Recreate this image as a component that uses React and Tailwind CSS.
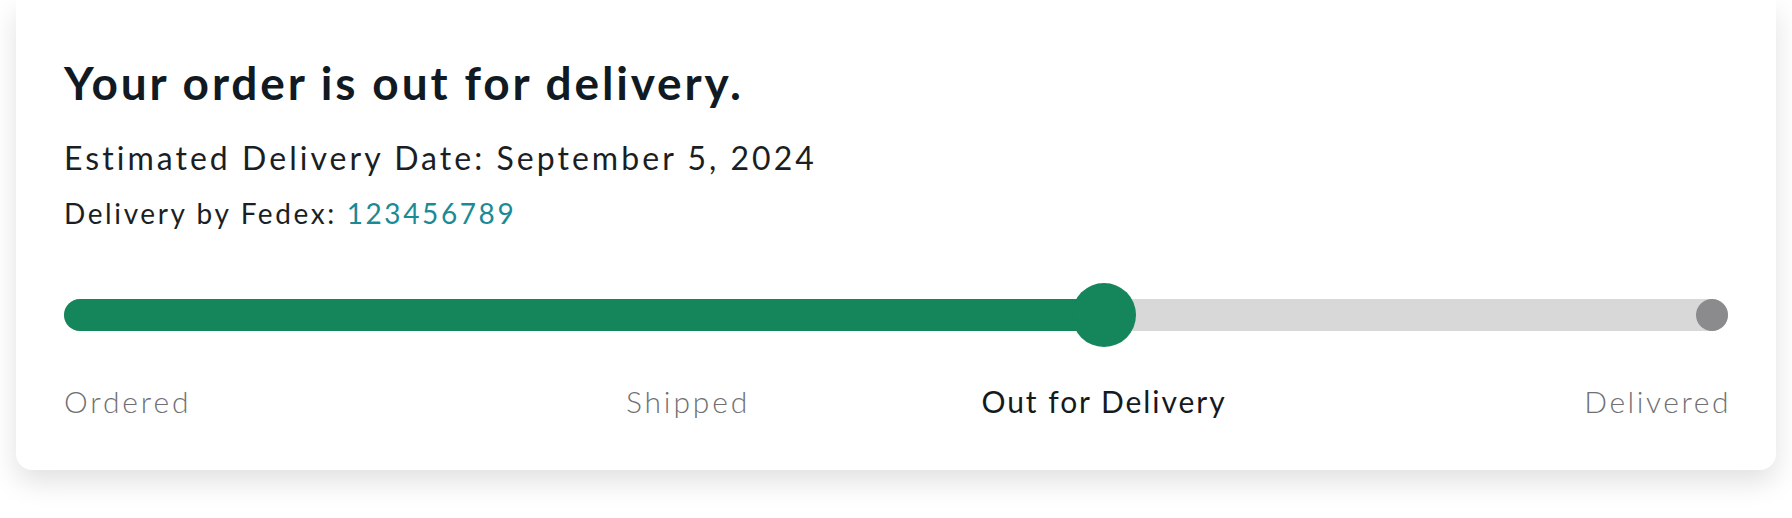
const steps = ['Ordered', 'Shipped', 'Out for Delivery', 'Delivered']

function ProgressTrack() {
  return (
    <div className="relative h-8 rounded-full bg-[#d8d8d8]">
      <div className="h-8 w-[62.5%] rounded-full bg-[#15855b]" />
      {/* current step thumb */}
      <div className="absolute left-[62.5%] top-1/2 h-16 w-16 -translate-x-1/2 -translate-y-1/2 rounded-full bg-[#15855b]" />
      {/* last step dot */}
      <div className="absolute right-0 top-0 h-8 w-8 rounded-full bg-[#8b8b8d]" />
    </div>
  )
}

function StepLabels() {
  return (
    <div className="mt-[55px] grid grid-cols-8 text-[30px] leading-[30px]">
      <div className="col-span-2 text-left font-light tracking-[0.095em] text-[#707074]">{steps[0]}</div>
      <div className="col-span-2 text-center font-light tracking-[0.095em] text-[#707074]">{steps[1]}</div>
      <div className="col-span-2 text-center font-normal tracking-[0.065em] text-[#151a21]">{steps[2]}</div>
      <div className="col-span-2 -mr-[3px] text-right font-light tracking-[0.085em] text-[#707074]">{steps[3]}</div>
    </div>
  )
}

export default function App() {
  return (
    <div className="min-h-[518px] bg-white px-4 font-['Lato','Liberation_Sans',sans-serif]">
      <div className="rounded-b-2xl bg-white px-12 pt-[60px] pb-[54px] shadow-[0_12px_28px_rgba(0,0,0,0.12)]">
        <h1 className="text-[46px] font-bold leading-[46px] tracking-[0.062em] text-[#111a22]">Your order is out for delivery.</h1>
        <p className="mt-[36px] text-[32px] leading-[32px] tracking-[0.095em] text-[#1b1f24]">Estimated Delivery Date: September 5, 2024</p>
        <p className="mt-[25px] text-[28px] leading-[28px] tracking-[0.093em] text-[#1b1f24]">
          Delivery by Fedex: <span className="text-[#1a8a96]">123456789</span>
        </p>
        <div className="mt-[72px]">
          <ProgressTrack />
        </div>
        <StepLabels />
      </div>
    </div>
  )
}
